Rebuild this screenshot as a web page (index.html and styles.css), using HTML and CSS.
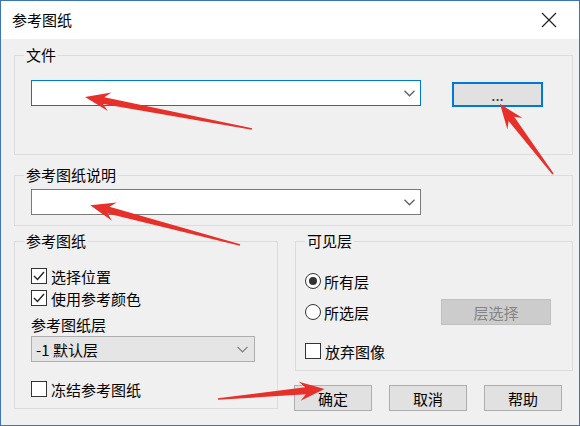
FILE: index.html
```html
<!DOCTYPE html>
<html lang="zh-CN">
<head>
    <meta charset="UTF-8">
    <meta name="viewport" content="width=device-width, initial-scale=1.0">
    <title>参考图纸</title>
    <link rel="stylesheet" href="styles.css">
</head>
<body>
    <div class="window">
        <div class="titlebar">
            <span class="title">参考图纸</span>
            <svg class="close" width="16" height="16" viewBox="0 0 16 16"><path d="M1 1L15 15M15 1L1 15" stroke="#222" stroke-width="1.2" fill="none"/></svg>
        </div>

        <div class="content">
            <fieldset class="group group-file">
                <legend>文件</legend>
                <div class="group-body file-row">
                    <div class="combo combo-focus combo-file">
                        <svg class="chevron" width="11" height="7" viewBox="0 0 11 7"><path d="M0.5 0.8L5.5 5.8L10.5 0.8" fill="none" stroke="#606060" stroke-width="1.3"/></svg>
                    </div>
                    <button class="btn btn-browse">...</button>
                </div>
            </fieldset>

            <fieldset class="group group-desc">
                <legend>参考图纸说明</legend>
                <div class="group-body">
                    <div class="combo combo-desc">
                        <svg class="chevron" width="11" height="7" viewBox="0 0 11 7"><path d="M0.5 0.8L5.5 5.8L10.5 0.8" fill="none" stroke="#606060" stroke-width="1.3"/></svg>
                    </div>
                </div>
            </fieldset>

            <div class="columns">
                <fieldset class="group group-ref">
                    <legend>参考图纸</legend>
                    <div class="group-body">
                        <div class="check">
                            <span class="box"><svg width="14" height="14" viewBox="0 0 14 14"><path d="M2 7L5.5 10.5L12 3" fill="none" stroke="#222" stroke-width="1.4"/></svg></span>
                            <span>选择位置</span>
                        </div>
                        <div class="check">
                            <span class="box"><svg width="14" height="14" viewBox="0 0 14 14"><path d="M2 7L5.5 10.5L12 3" fill="none" stroke="#222" stroke-width="1.4"/></svg></span>
                            <span>使用参考颜色</span>
                        </div>
                        <div class="field-label">参考图纸层</div>
                        <div class="combo combo-layer">
                            <span class="combo-text">-1 默认层</span>
                            <svg class="chevron" width="11" height="7" viewBox="0 0 11 7"><path d="M0.5 0.8L5.5 5.8L10.5 0.8" fill="none" stroke="#7a7a7a" stroke-width="1.2"/></svg>
                        </div>
                        <div class="check check-freeze">
                            <span class="box"></span>
                            <span>冻结参考图纸</span>
                        </div>
                    </div>
                </fieldset>

                <div class="right-col">
                    <fieldset class="group group-layer">
                        <legend>可见层</legend>
                        <div class="group-body">
                            <div class="radio-row">
                                <span class="radio checked"></span>
                                <span>所有层</span>
                            </div>
                            <div class="radio-row layer-pick">
                                <span class="radio"></span>
                                <span>所选层</span>
                                <button class="btn btn-disabled">层选择</button>
                            </div>
                            <div class="check check-drop">
                                <span class="box"></span>
                                <span>放弃图像</span>
                            </div>
                        </div>
                    </fieldset>
                    <div class="actions">
                        <button class="btn">确定</button>
                        <button class="btn">取消</button>
                        <button class="btn">帮助</button>
                    </div>
                </div>
            </div>
        </div>

        <!-- red annotation arrows drawn over the dialog -->
        <svg class="arrows" width="580" height="426" viewBox="0 0 580 426">
            <g fill="#e8302a">
                <polygon transform="translate(252 129) rotate(190.85)" points="0,-0.8 151,-3.5 145,-9.5 170,0 145,9.5 151,3.5 0,0.8"/>
                <polygon transform="translate(553 174) rotate(-127.1)" points="0,-0.8 69,-3.5 63,-9.5 88,0 63,9.5 69,3.5 0,0.8"/>
                <polygon transform="translate(240 245) rotate(194.9)" points="0,-0.8 136,-3.5 130,-9.5 155,0 130,9.5 136,3.5 0,0.8"/>
                <polygon transform="translate(218 399) rotate(-5.4)" points="0,-0.8 88,-3.5 82,-9.5 107,0 82,9.5 88,3.5 0,0.8"/>
            </g>
        </svg>
    </div>
</body>
</html>
```

FILE: styles.css
```css
* {
    box-sizing: border-box;
}
body {
    margin: 0;
    font-family: "Noto Sans CJK SC", "Noto Sans", sans-serif;
    font-size: 15px;
    color: #000;
}
.window {
    position: relative;
    width: 580px;
    height: 426px;
    border: 1px solid #3d74b6;
    background: #f0f0f0;
}
.titlebar {
    height: 38px;
    background: #fff;
    display: flex;
    align-items: center;
    justify-content: space-between;
    padding: 0 22px 0 11px;
}
.title {
    font-size: 15px;
    line-height: 18px;
}
.content {
    padding: 7px 6px 0 13px;
}
.group {
    margin: 0;
    padding: 0;
    border: 1px solid #dcdcdc;
    min-width: 0;
}
.group legend {
    padding: 0 2px;
    margin-left: 9px;
    height: 18px;
    line-height: 18px;
}
.file-row {
    display: flex;
    align-items: flex-start;
    padding: 16px 0 47px 16px;
}
.combo {
    height: 26px;
    border: 1px solid #7a7a7a;
    background: #fff;
    display: flex;
    align-items: center;
    justify-content: flex-end;
    padding-right: 5px;
}
.combo-focus {
    border-color: #0078d7;
}
.combo-file,
.combo-desc {
    width: 390px;
}
.btn {
    font: inherit;
    color: #000;
    background: #e1e1e1;
    border: 1px solid #adadad;
    padding: 0;
    height: 26px;
    width: 78px;
}
.btn-browse {
    width: 91px;
    height: 25px;
    margin: 2px 0 0 31px;
    border: 2px solid #0078d7;
    color: #333;
}
.group-desc {
    margin-top: 11px;
}
.group-desc .group-body {
    padding: 5px 0 10px 16px;
}
.columns {
    display: flex;
    align-items: flex-start;
    gap: 17px;
    margin-top: 6px;
}
.group-ref {
    width: 264px;
}
.group-ref .group-body {
    padding: 15px 16px 8px;
}
.check,
.radio-row {
    display: flex;
    align-items: center;
    height: 22px;
}
.box {
    width: 16px;
    height: 16px;
    border: 1px solid #333;
    background: #fff;
    margin-right: 4px;
    display: flex;
    align-items: center;
    justify-content: center;
}
.field-label {
    height: 20px;
    line-height: 20px;
    margin-top: 6px;
}
.combo-layer {
    width: 224px;
    margin-top: 1px;
    background: #e5e5e5;
    border-color: #adadad;
    justify-content: space-between;
    padding: 0 6px 0 4px;
}
.check-freeze {
    margin-top: 16px;
}
.right-col {
    width: 278px;
}
.group-layer .group-body {
    padding: 20px 21px 8px 9px;
}
.radio {
    width: 16px;
    height: 16px;
    border: 1px solid #333;
    border-radius: 50%;
    background: #fff;
    margin-right: 3px;
    display: flex;
    align-items: center;
    justify-content: center;
}
.radio.checked::after {
    content: "";
    width: 8px;
    height: 8px;
    border-radius: 50%;
    background: #333;
}
.layer-pick {
    height: 26px;
    margin-top: 7px;
}
.btn-disabled {
    margin-left: auto;
    width: 110px;
    background: #cccccc;
    border-color: #bfbfbf;
    color: #838383;
}
.check-drop {
    margin-top: 15px;
}
.actions {
    display: flex;
    gap: 17px;
    margin: 14px 0 0 -1px;
}
.arrows {
    position: absolute;
    top: -1px;
    left: -1px;
    pointer-events: none;
}
```
